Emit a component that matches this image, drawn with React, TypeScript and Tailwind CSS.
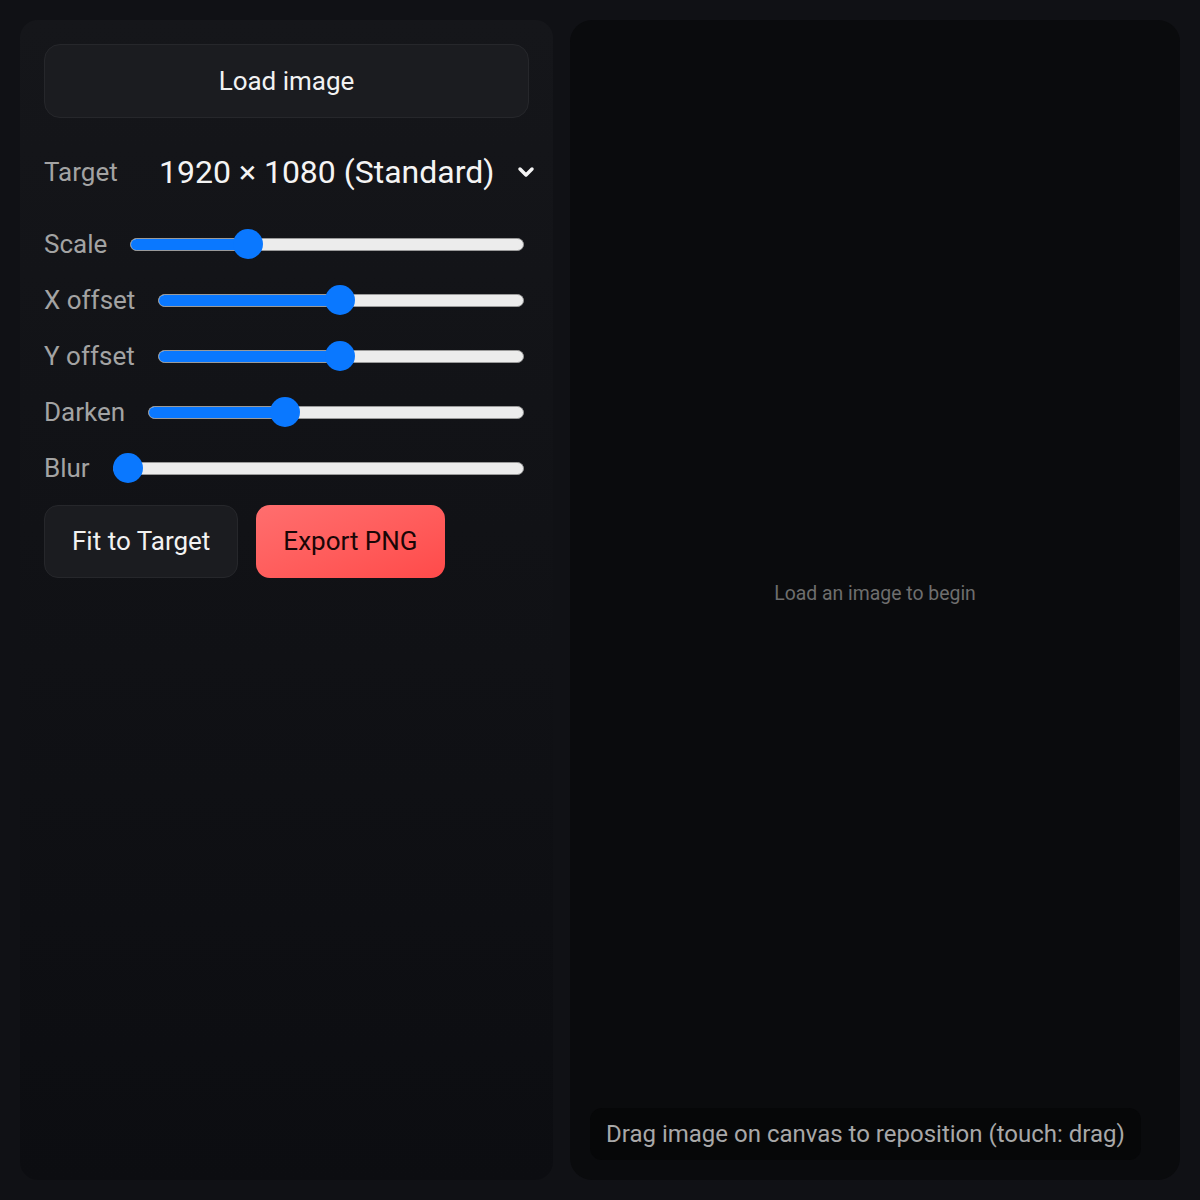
import { ChevronDown } from "lucide-react";

type SliderProps = {
  label: string;
  value: number;
};

// Range row: label followed by a pill track with a round thumb
function SliderRow({ label, value }: SliderProps) {
  return (
    <div className="flex items-center gap-[23px] h-[56px]">
      <span className="text-[26px] text-[#a3a3a3] whitespace-nowrap">{label}</span>
      <div className="relative flex-1 h-[30px] flex items-center mr-[5px]">
        <div className="w-full h-[13px] rounded-full bg-[#ececec] border border-[#9a9a9a] overflow-hidden">
          <div
            className="h-full bg-[#0a78ff]"
            style={{ width: `calc(15px + (100% - 30px) * ${value})` }}
          />
        </div>
        <div
          className="absolute top-0 w-[30px] h-[30px] rounded-full bg-[#0a78ff]"
          style={{ left: `calc((100% - 30px) * ${value})` }}
        />
      </div>
    </div>
  );
}

export default function App() {
  return (
    <div
      className="w-[1200px] h-[1200px] bg-[#101115] p-[20px] flex gap-[17px] text-white"
      style={{ fontFamily: "Roboto, 'Noto Sans', sans-serif" }}
    >
      <aside className="w-[533px] h-full rounded-[18px] bg-gradient-to-b from-[#15161a] to-[#0c0d11] p-[24px] flex flex-col">
        <button className="h-[74px] w-full rounded-[16px] bg-[#1b1c20] border border-[#26272b] text-[26px] text-[#f2f2f2]">
          Load image
        </button>

        <div className="flex items-center mt-[24px] h-[60px]">
          <span className="text-[26px] text-[#a3a3a3] w-[115px]">Target</span>
          <div className="flex items-center flex-1">
            <span className="text-[32px] text-[#f4f4f4]">1920 × 1080 (Standard)</span>
            <ChevronDown className="ml-[20px] -mr-[20px]" size={24} strokeWidth={3.5} color="#f4f4f4" />
          </div>
        </div>

        <div className="flex flex-col mt-[14px]">
          <SliderRow label="Scale" value={0.283} />
          <SliderRow label="X offset" value={0.497} />
          <SliderRow label="Y offset" value={0.497} />
          <SliderRow label="Darken" value={0.353} />
          <SliderRow label="Blur" value={0} />
        </div>

        <div className="flex gap-[18px] mt-[9px]">
          <button className="h-[73px] px-[27px] rounded-[14px] bg-[#1b1c20] border border-[#26272b] text-[26px] text-[#f2f2f2]">
            Fit to Target
          </button>
          <button className="h-[73px] px-[27px] rounded-[14px] bg-gradient-to-br from-[#ff6e6e] to-[#ff4a4a] text-[26px] text-[#1a0606]">
            Export PNG
          </button>
        </div>
      </aside>

      <main className="relative flex-1 h-full rounded-[22px] bg-[#0a0b0d] flex items-center justify-center">
        <span className="text-[19.4px] text-[#6e6e6e] -mt-[12px]">Load an image to begin</span>
        <div className="absolute left-[20px] bottom-[20px] px-[16px] h-[52px] flex items-center rounded-[12px] bg-[#060708]">
          <span className="text-[24px] text-[#a8a8a8]">Drag image on canvas to reposition (touch: drag)</span>
        </div>
      </main>
    </div>
  );
}
